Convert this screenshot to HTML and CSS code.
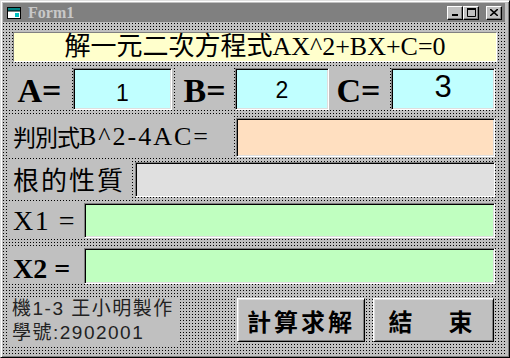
FILE: index.html
```html
<!DOCTYPE html>
<html lang="zh-Hant">
<head>
    <meta charset="UTF-8">
    <title>Form1</title>
    <link rel="stylesheet" href="styles.css">
</head>
<body>

<div class="window">
    <div class="titlebar">
        <svg class="app-icon" width="16" height="14" viewBox="0 0 16 14">
            <rect x="1.5" y="1.5" width="13" height="11" fill="#fff" stroke="#000"/>
            <rect x="2" y="2" width="12" height="3" fill="#008080"/>
            <path d="M2 5 L14 5" stroke="#000"/>
            <path d="M9 7 L13 7 L13 11 L9 11 Z" fill="#00c0c0"/>
        </svg>
        <span class="title">Form1</span>
        <div class="caption-buttons">
            <span class="cap-btn">
                <svg width="8" height="7" viewBox="0 0 8 7"><rect x="1" y="5" width="6" height="2" fill="#000"/></svg>
            </span>
            <span class="cap-btn">
                <svg width="9" height="9" viewBox="0 0 9 9"><path d="M0.5 1.5 H8.5 V8.5 H0.5 Z" fill="none" stroke="#000"/><rect x="0" y="0" width="9" height="2" fill="#000"/></svg>
            </span>
            <span class="cap-btn cap-close">
                <svg width="8" height="7" viewBox="0 0 8 7"><path d="M0 0 L8 7 M8 0 L0 7" stroke="#000" stroke-width="1.6"/></svg>
            </span>
        </div>
    </div>

    <div class="client">
        <div class="heading">解一元二次方程式AX^2+BX+C=0</div>

        <div class="row row-abc">
            <div class="label coef coef-a">A=</div>
            <div class="textbox cyan tb-a"><span class="num num-a">1</span></div>
            <div class="label coef coef-b">B=</div>
            <div class="textbox cyan tb-b"><span class="num num-b">2</span></div>
            <div class="label coef coef-c">C=</div>
            <div class="textbox cyan tb-c"><span class="num num-c">3</span></div>
        </div>

        <div class="row row-disc">
            <div class="label cjk-label disc-label">判別式<span class="latin">B^2-4AC=</span></div>
            <div class="textbox peach"></div>
        </div>

        <div class="row row-kind">
            <div class="label cjk-label kind-label">根的性質</div>
            <div class="textbox pale"></div>
        </div>

        <div class="row row-x1">
            <div class="label x-label">X1 =</div>
            <div class="textbox green"></div>
        </div>

        <div class="row row-x2">
            <div class="label x-label x-bold">X2 =</div>
            <div class="textbox green"></div>
        </div>

        <div class="row row-bottom">
            <div class="notes">
                <div class="label note">機1-3 王小明製作</div>
                <div class="label note">學號:2902001</div>
            </div>
            <div class="button btn-solve">計算求解</div>
            <div class="button btn-end">結　束</div>
        </div>
    </div>
</div>

</body>
</html>
```

FILE: styles.css
```css
body {
    margin: 0;
    background: #c0c0c0;
}

.window {
    width: 510px;
    height: 358px;
    box-sizing: border-box;
    border: 1px solid;
    border-color: #dfdfdf #000 #000 #dfdfdf;
    box-shadow: inset 1px 1px #fff, inset -1px -1px #808080;
    padding: 2px 4px 1px 2px;
    background: #c0c0c0;
    display: flex;
    flex-direction: column;
}

/* title bar (inactive) */
.titlebar {
    height: 19px;
    flex: none;
    background: #808080;
    display: flex;
    align-items: center;
    padding: 0 3px 0 3px;
    margin-bottom: 1px;
}
.app-icon { flex: none; }
.title {
    margin-left: 6px;
    font: bold 16px "Liberation Serif", serif;
    color: #c8c8c8;
}
.caption-buttons {
    margin-left: auto;
    display: flex;
}
.cap-btn {
    width: 16px;
    height: 14px;
    box-sizing: border-box;
    background: #c0c0c0;
    border: 1px solid;
    border-color: #fff #000 #000 #fff;
    box-shadow: inset -1px -1px #808080;
    display: flex;
    align-items: center;
    justify-content: center;
}
.cap-close { margin-left: 7px; }

/* form client with design grid */
.client {
    flex: 1;
    display: flex;
    flex-direction: column;
    padding: 9px 10px 0 6px;
    background-color: #c0c0c0;
    background-image: conic-gradient(from 270deg at 1px 1px, #000 90deg, transparent 0);
    background-size: 3px 3px;
}

.heading {
    height: 30px;
    margin-left: 4px;
    margin-right: -2px;
    box-sizing: border-box;
    background: #ffffcc;
    border: 1px solid;
    border-color: #808080 #fff #fff #808080;
    font: 26px "Liberation Serif", "Noto Sans CJK TC", serif;
    line-height: 28px;
    text-align: center;
    color: #000;
}

.row {
    display: flex;
    flex: none;
}
.row-abc { margin-top: 5px; height: 43px; }
.row-disc { margin-top: 5px; height: 43px; }
.row-kind { margin-top: 2px; height: 38px; }
.row-x1 { margin-top: 4px; height: 37px; }
.row-x2 { margin-top: 9px; height: 36px; }
.row-bottom { margin-top: 13px; height: 48px; }

.label {
    background: #c0c0c0;
    display: flex;
    align-items: center;
    color: #000;
    box-sizing: border-box;
    white-space: nowrap;
    line-height: 1.1;
}

.textbox {
    box-sizing: border-box;
    border: 1px solid;
    border-color: #808080 #fff #fff #808080;
    box-shadow: inset 1px 1px #000, inset -1px -1px #dfdfdf;
    display: flex;
    justify-content: center;
    align-items: flex-start;
}
.cyan { background: #c0ffff; }
.peach { background: #ffdfc0; flex: 1; margin: 3px 0 1px 4px; }
.pale { background: #e0e0e0; flex: 1; margin: 2px 0 1px 5px; }
.green { background: #c0ffc0; flex: 1; margin-left: 2px; }
.row-x1 .green { margin-top: 1px; margin-bottom: 1px; }

/* A= B= C= */
.coef {
    font: bold 34px "Liberation Serif", serif;
    justify-content: center;
    padding-top: 4px;
}
.coef-a { width: 61px; }
.coef-b { width: 55px; margin-left: 5px; }
.coef-c { width: 59px; }

.tb-a { width: 99px; margin: 1px 0 0 3px; }
.tb-b { width: 94px; margin: 1px 0 0 3px; }
.tb-c { width: 104px; margin: 1px 0 0 3px; }

.num {
    font-family: "Liberation Sans", Arial, sans-serif;
    font-size: 23px;
    color: #000;
}
.num-a { padding-top: 11px; }
.num-b { padding-top: 8px; }
.num-c { font-size: 31px; padding-top: 0; }

.cjk-label {
    font: 23px "Noto Sans CJK TC", sans-serif;
    line-height: 1.1;
    padding-left: 4px;
}
.disc-label { width: 223px; letter-spacing: -1px; }
.latin {
    font: 26px "Liberation Serif", serif;
    letter-spacing: 2px;
}
.kind-label {
    width: 121px;
    font-size: 26px;
    letter-spacing: 2px;
}

.x-label {
    width: 73px;
    padding-left: 4px;
    font: 28px "Liberation Serif", serif;
    letter-spacing: 1.5px;
}
.x-bold { font-weight: bold; letter-spacing: 0; padding-top: 6px; }

/* footer */
.notes {
    width: 169px;
    display: flex;
    flex-direction: column;
}
.note {
    height: 24px;
    padding-left: 3px;
    font: 19px "Liberation Sans", "Noto Sans CJK TC", sans-serif;
    line-height: 22px;
    letter-spacing: 1.5px;
    color: #222;
}

.button {
    box-sizing: border-box;
    height: 44px;
    margin-top: 1px;
    background: #c0c0c0;
    border: 1px solid;
    border-color: #fff #000 #000 #fff;
    box-shadow: inset 1px 1px #dfdfdf, inset -1px -1px #808080;
    display: flex;
    align-items: center;
    justify-content: center;
    font: bold 24px "Noto Sans CJK TC", sans-serif;
    color: #000;
}
.btn-solve { width: 128px; margin-left: 59px; letter-spacing: 3px; }
.btn-end { width: 121px; margin-left: 8px; letter-spacing: 6px; }
```
